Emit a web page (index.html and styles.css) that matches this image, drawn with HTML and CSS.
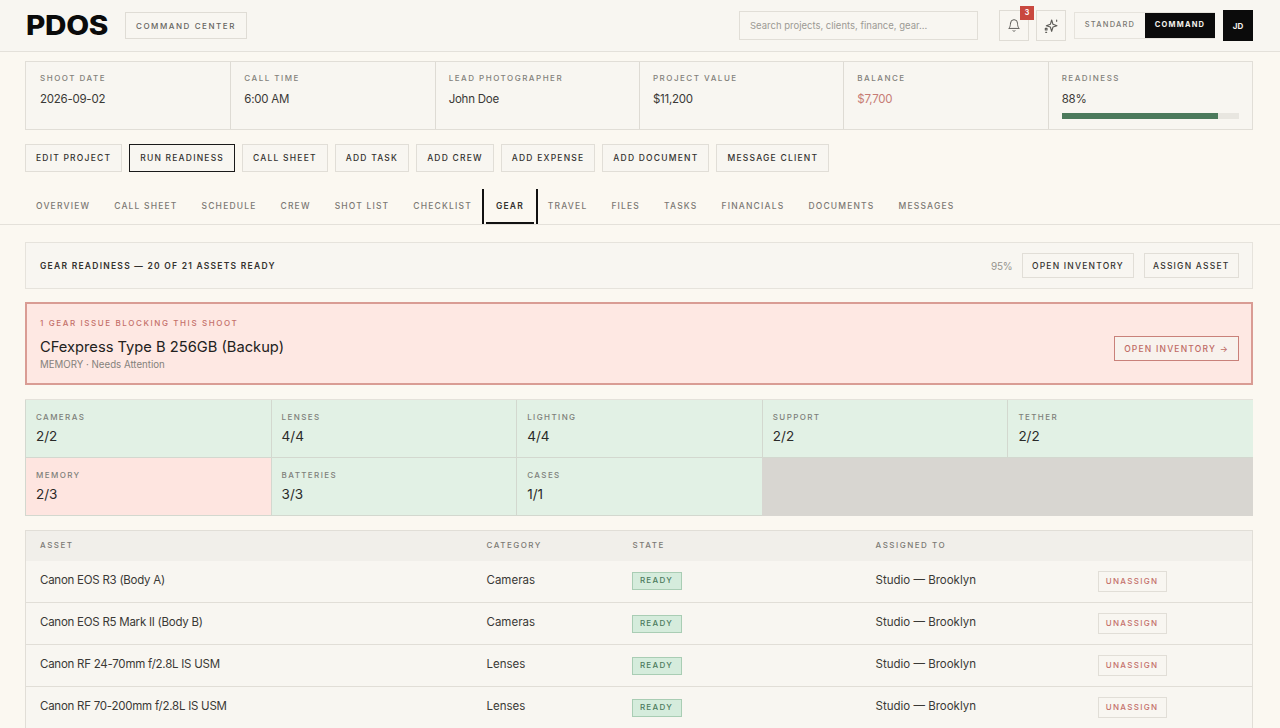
FILE: index.html
```html
<!DOCTYPE html>
<html lang="en">
<head>
  <meta charset="UTF-8" />
  <meta name="viewport" content="width=device-width, initial-scale=1.0"/>
  <title>PDOS Command Center</title>
  <link rel="stylesheet" href="styles.css">
</head>
<body>
  <header class="topbar">
    <div class="logo">PDOS</div>
    <div class="contextTag">COMMAND CENTER</div>
    <input class="search" type="text" placeholder="Search projects, clients, finance, gear...">
    <button class="iconBtn bellBtn">
      <svg width="14" height="15" viewBox="0 0 24 24" fill="none" stroke="currentColor" stroke-width="1.7" stroke-linecap="round" stroke-linejoin="round"><path d="M6 8a6 6 0 0 1 12 0c0 7 3 9 3 9H3s3-2 3-9"/><path d="M10.3 21a1.94 1.94 0 0 0 3.4 0"/></svg>
      <span class="badge">3</span>
    </button>
    <button class="iconBtn">
      <svg width="16" height="16" viewBox="0 0 24 24" fill="none" stroke="currentColor" stroke-width="1.7" stroke-linecap="round" stroke-linejoin="round"><path d="M13 3l2 6.5 6 2-6 2-2 6.5-2-6.5-6-2 6-2z"/><path d="M20.5 3v2"/><path d="M3.5 15.5h2.5v2.5h-2.5z"/><path d="M4 21.5h1.5"/></svg>
    </button>
    <div class="modeSwitch">
      <span class="modeOpt">STANDARD</span>
      <span class="modeOpt on">COMMAND</span>
    </div>
    <div class="avatar">JD</div>
  </header>

  <main class="page">
    <section class="stats">
      <div class="stat"><div class="statLabel">SHOOT DATE</div><div class="statValue">2026-09-02</div></div>
      <div class="stat"><div class="statLabel">CALL TIME</div><div class="statValue">6:00 AM</div></div>
      <div class="stat"><div class="statLabel">LEAD PHOTOGRAPHER</div><div class="statValue">John Doe</div></div>
      <div class="stat"><div class="statLabel">PROJECT VALUE</div><div class="statValue">$11,200</div></div>
      <div class="stat"><div class="statLabel">BALANCE</div><div class="statValue danger">$7,700</div></div>
      <div class="stat">
        <div class="statLabel">READINESS</div>
        <div class="statValue">88%</div>
        <div class="meter"><div class="meterFill" style="width: 88%"></div></div>
      </div>
    </section>

    <div class="actions">
      <button class="btn">EDIT PROJECT</button>
      <button class="btn primary">RUN READINESS</button>
      <button class="btn">CALL SHEET</button>
      <button class="btn">ADD TASK</button>
      <button class="btn">ADD CREW</button>
      <button class="btn">ADD EXPENSE</button>
      <button class="btn">ADD DOCUMENT</button>
      <button class="btn">MESSAGE CLIENT</button>
    </div>

    <nav class="tabs">
      <a class="tab">OVERVIEW</a>
      <a class="tab">CALL SHEET</a>
      <a class="tab">SCHEDULE</a>
      <a class="tab">CREW</a>
      <a class="tab">SHOT LIST</a>
      <a class="tab">CHECKLIST</a>
      <a class="tab active">GEAR</a>
      <a class="tab">TRAVEL</a>
      <a class="tab">FILES</a>
      <a class="tab">TASKS</a>
      <a class="tab">FINANCIALS</a>
      <a class="tab">DOCUMENTS</a>
      <a class="tab">MESSAGES</a>
    </nav>

    <section class="readyBar">
      <div class="readyTitle">GEAR READINESS — 20 OF 21 ASSETS READY</div>
      <div class="readyRight">
        <span class="readyPct">95%</span>
        <button class="btn small">OPEN INVENTORY</button>
        <button class="btn small">ASSIGN ASSET</button>
      </div>
    </section>

    <section class="alert">
      <div>
        <div class="alertLabel">1 GEAR ISSUE BLOCKING THIS SHOOT</div>
        <div class="alertTitle">CFexpress Type B 256GB (Backup)</div>
        <div class="alertSub">MEMORY · Needs Attention</div>
      </div>
      <button class="btn small alertBtn">OPEN INVENTORY →</button>
    </section>

    <section class="catGrid">
      <div class="cat ok"><div class="catLabel">CAMERAS</div><div class="catValue">2/2</div></div>
      <div class="cat ok"><div class="catLabel">LENSES</div><div class="catValue">4/4</div></div>
      <div class="cat ok"><div class="catLabel">LIGHTING</div><div class="catValue">4/4</div></div>
      <div class="cat ok"><div class="catLabel">SUPPORT</div><div class="catValue">2/2</div></div>
      <div class="cat ok"><div class="catLabel">TETHER</div><div class="catValue">2/2</div></div>
      <div class="cat bad"><div class="catLabel">MEMORY</div><div class="catValue">2/3</div></div>
      <div class="cat ok"><div class="catLabel">BATTERIES</div><div class="catValue">3/3</div></div>
      <div class="cat ok"><div class="catLabel">CASES</div><div class="catValue">1/1</div></div>
    </section>

    <table class="assets">
      <colgroup>
        <col class="colAsset"><col class="colCategory"><col class="colState"><col class="colAssigned"><col>
      </colgroup>
      <thead>
        <tr><th>ASSET</th><th>CATEGORY</th><th>STATE</th><th>ASSIGNED TO</th><th></th></tr>
      </thead>
      <tbody>
        <tr>
          <td class="assetName">Canon EOS R3 (Body A)</td><td>Cameras</td><td class="ctl"><span class="pill">READY</span></td>
          <td>Studio — Brooklyn</td><td class="ctl"><button class="unassign">UNASSIGN</button></td>
        </tr>
        <tr>
          <td class="assetName">Canon EOS R5 Mark II (Body B)</td><td>Cameras</td><td class="ctl"><span class="pill">READY</span></td>
          <td>Studio — Brooklyn</td><td class="ctl"><button class="unassign">UNASSIGN</button></td>
        </tr>
        <tr>
          <td class="assetName">Canon RF 24-70mm f/2.8L IS USM</td><td>Lenses</td><td class="ctl"><span class="pill">READY</span></td>
          <td>Studio — Brooklyn</td><td class="ctl"><button class="unassign">UNASSIGN</button></td>
        </tr>
        <tr>
          <td class="assetName">Canon RF 70-200mm f/2.8L IS USM</td><td>Lenses</td><td class="ctl"><span class="pill">READY</span></td>
          <td>Studio — Brooklyn</td><td class="ctl"><button class="unassign">UNASSIGN</button></td>
        </tr>
      </tbody>
    </table>
  </main>
</body>
</html>
```

FILE: styles.css
```css
* {
  box-sizing: border-box;
}

html, body {
  height: 100%;
  overflow: hidden;
}

body {
  margin: 0;
  font-family: Inter, 'Noto Sans', sans-serif;
  background: #fbf8f1;
  color: #2a2a28;
  font-size: 12px;
}

button {
  font-family: inherit;
  cursor: pointer;
}

.topbar {
  display: flex;
  align-items: center;
  height: 52px;
  padding: 0 27px 0 26px;
  background: #f8f6f1;
  border-bottom: 1px solid #e4e1da;
}

.logo {
  font-size: 27px;
  font-weight: 800;
  letter-spacing: -0.3px;
  color: #0b0b0b;
  width: 81px;
  transform: scaleX(1.1);
  transform-origin: left center;
}

.contextTag {
  margin-left: 18px;
  height: 27px;
  padding: 0 10px;
  display: flex;
  align-items: center;
  border: 1px solid #dfdcd5;
  font-size: 8px;
  font-weight: 500;
  letter-spacing: 1.55px;
  color: #66645f;
}

.search {
  margin-left: auto;
  width: 239px;
  height: 29px;
  padding: 0 10px;
  background: #f8f6f1;
  border: 1px solid #e1ded7;
  font-family: inherit;
  font-size: 9.5px;
  color: #333;
  outline: none;
}

.search::placeholder {
  color: #9c9a94;
}

.iconBtn {
  position: relative;
  width: 30px;
  height: 31px;
  margin-left: 7px;
  padding: 0;
  display: flex;
  align-items: center;
  justify-content: center;
  background: #f8f6f1;
  border: 1px solid #dfdcd5;
  color: #5c5b57;
}

.bellBtn {
  margin-left: 21px;
}

.badge {
  position: absolute;
  top: -5px;
  right: -6px;
  width: 14px;
  height: 14px;
  background: #c9483f;
  color: #fff;
  font-size: 7px;
  font-weight: 700;
  line-height: 14px;
  text-align: center;
}

.modeSwitch {
  display: flex;
  width: 141px;
  height: 27px;
  margin-left: 8px;
  border: 1px solid #e6e3dc;
  border-right: 0;
}

.modeOpt {
  display: flex;
  align-items: center;
  justify-content: center;
  flex: 1;
  height: 25px;
  padding-bottom: 2px;
  font-size: 7.5px;
  font-weight: 500;
  letter-spacing: 1.2px;
  color: #7b7974;
}

.modeOpt.on {
  background: #0b0b0b;
  color: #f4f2ec;
  font-weight: 700;
}

.avatar {
  width: 30px;
  height: 31px;
  margin-left: 8px;
  background: #0b0b0b;
  color: #f4f2ec;
  display: flex;
  align-items: center;
  justify-content: center;
  font-size: 8px;
  font-weight: 700;
}

.page {
  padding: 9px 27px 0 25px;
}

.stats {
  display: grid;
  grid-template-columns: repeat(6, 1fr);
  height: 69px;
  background: #f8f6f1;
  border: 1px solid #e1ded7;
}

.stat {
  padding: 11px 13px 0;
  border-left: 1px solid #dedbd4;
}

.stat:first-child {
  padding-left: 14px;
  border-left: 0;
}

.statLabel {
  font-size: 8px;
  font-weight: 500;
  letter-spacing: 1.5px;
  color: #83817b;
  line-height: 11px;
}

.statValue {
  margin-top: 7px;
  font-size: 11.5px;
  letter-spacing: -0.25px;
  line-height: 16px;
  color: #3a3936;
}

.statValue.danger {
  color: #c77c75;
}

.meter {
  height: 6px;
  margin-top: 6px;
  background: #e8e6e0;
}

.meterFill {
  height: 100%;
  background: #4c7a5c;
}

.actions {
  display: flex;
  gap: 7px;
  margin-top: 14px;
}

.btn {
  height: 28px;
  padding: 0 10px;
  background: #f8f6f1;
  border: 1px solid #e1ded7;
  font-size: 8.5px;
  font-weight: 500;
  letter-spacing: 1.21px;
  color: #33322f;
}

.btn.primary {
  border-color: #1a1a1a;
}

.tabs {
  display: flex;
  height: 36px;
  margin: 17px -27px 0 -25px;
  padding-left: 24px;
  border-bottom: 1px solid #e4e1da;
}

.tab {
  position: relative;
  display: flex;
  align-items: center;
  padding: 0 12px 2px;
  font-size: 8.5px;
  font-weight: 500;
  letter-spacing: 1.18px;
  color: #7b7974;
}

.tab.active {
  margin: 0 -2px;
  border-left: 2px solid #111;
  border-right: 2px solid #111;
  color: #33322f;
  font-weight: 600;
}

.tab.active::after {
  content: "";
  position: absolute;
  left: 2px;
  right: 2px;
  bottom: 0;
  height: 2px;
  background: #111;
}

.readyBar {
  display: flex;
  align-items: center;
  justify-content: space-between;
  height: 47px;
  margin-top: 17px;
  padding: 0 13px 0 14px;
  background: #f8f6f1;
  border: 1px solid #e6e3dc;
}

.readyTitle {
  font-size: 8.5px;
  font-weight: 600;
  letter-spacing: 1.25px;
  color: #33322f;
}

.readyRight {
  display: flex;
  align-items: center;
  gap: 10px;
}

.readyPct {
  font-size: 10px;
  letter-spacing: -0.2px;
  color: #95938d;
}

.btn.small {
  height: 25px;
  padding: 0 8.5px;
}

.alert {
  display: flex;
  align-items: center;
  justify-content: space-between;
  height: 83px;
  margin-top: 13px;
  padding: 0 12px 0 13px;
  background: #fee8e3;
  border: 2px solid #d99c94;
}

.alertLabel {
  font-size: 8px;
  font-weight: 500;
  letter-spacing: 1.6px;
  color: #c4706a;
}

.alertTitle {
  margin-top: 10px;
  font-size: 14.7px;
  line-height: 19px;
  color: #222120;
}

.alertSub {
  margin-top: 2px;
  font-size: 9.7px;
  color: #85827c;
}

.btn.small.alertBtn {
  margin-top: 10px;
  padding: 0 9px;
  background: #f8f2ed;
  border-color: #c9817a;
  color: #bf6a64;
}

.catGrid {
  display: grid;
  grid-template-columns: repeat(5, 1fr);
  grid-auto-rows: 58px;
  margin-top: 14px;
  background: #d8d6d1;
  border-top: 1px solid #e4e1da;
}

.cat {
  padding: 11px 10px 0;
  border-left: 1px solid #d3d8cf;
  border-bottom: 1px solid #d3d8cf;
}

.cat.ok {
  background: #e2f1e5;
}

.cat.bad {
  background: #fee5e0;
}

.catLabel {
  font-size: 8px;
  font-weight: 500;
  letter-spacing: 1.4px;
  line-height: 12px;
  color: #7d807a;
}

.catValue {
  margin-top: 4px;
  font-size: 13.5px;
  line-height: 18px;
  color: #2a2a28;
}

.assets {
  width: 100%;
  margin-top: 14px;
  table-layout: fixed;
  border-collapse: collapse;
  background: #f8f6f1;
  border: 1px solid #e1ded7;
}

.colAsset { width: 447px; }
.colCategory { width: 146px; }
.colState { width: 243px; }
.colAssigned { width: 222px; }

.assets th {
  height: 30px;
  padding: 0 0 1px 14px;
  background: #f1efea;
  text-align: left;
  font-size: 8px;
  font-weight: 500;
  letter-spacing: 1.5px;
  color: #7b7974;
}

.assets td {
  height: 42px;
  padding: 0 0 3px 14px;
  border-bottom: 1px solid #e1ded7;
  font-size: 11.5px;
  color: #3a3936;
}

.assets td.assetName {
  letter-spacing: -0.25px;
}

.assets td.ctl {
  padding-bottom: 0;
}

.pill {
  display: block;
  width: 50px;
  height: 18px;
  margin-left: -1px;
  background: #d5ecdc;
  border: 1px solid #a9cdb4;
  font-size: 8px;
  font-weight: 500;
  letter-spacing: 1.3px;
  line-height: 15px;
  text-align: center;
  color: #4c7a5c;
}

.unassign {
  display: block;
  width: 69px;
  height: 21px;
  padding: 0 0 1px;
  background: #f8f6f1;
  border: 1px solid #e1ded7;
  font-size: 8px;
  font-weight: 500;
  letter-spacing: 1.3px;
  color: #c4706a;
}
```
